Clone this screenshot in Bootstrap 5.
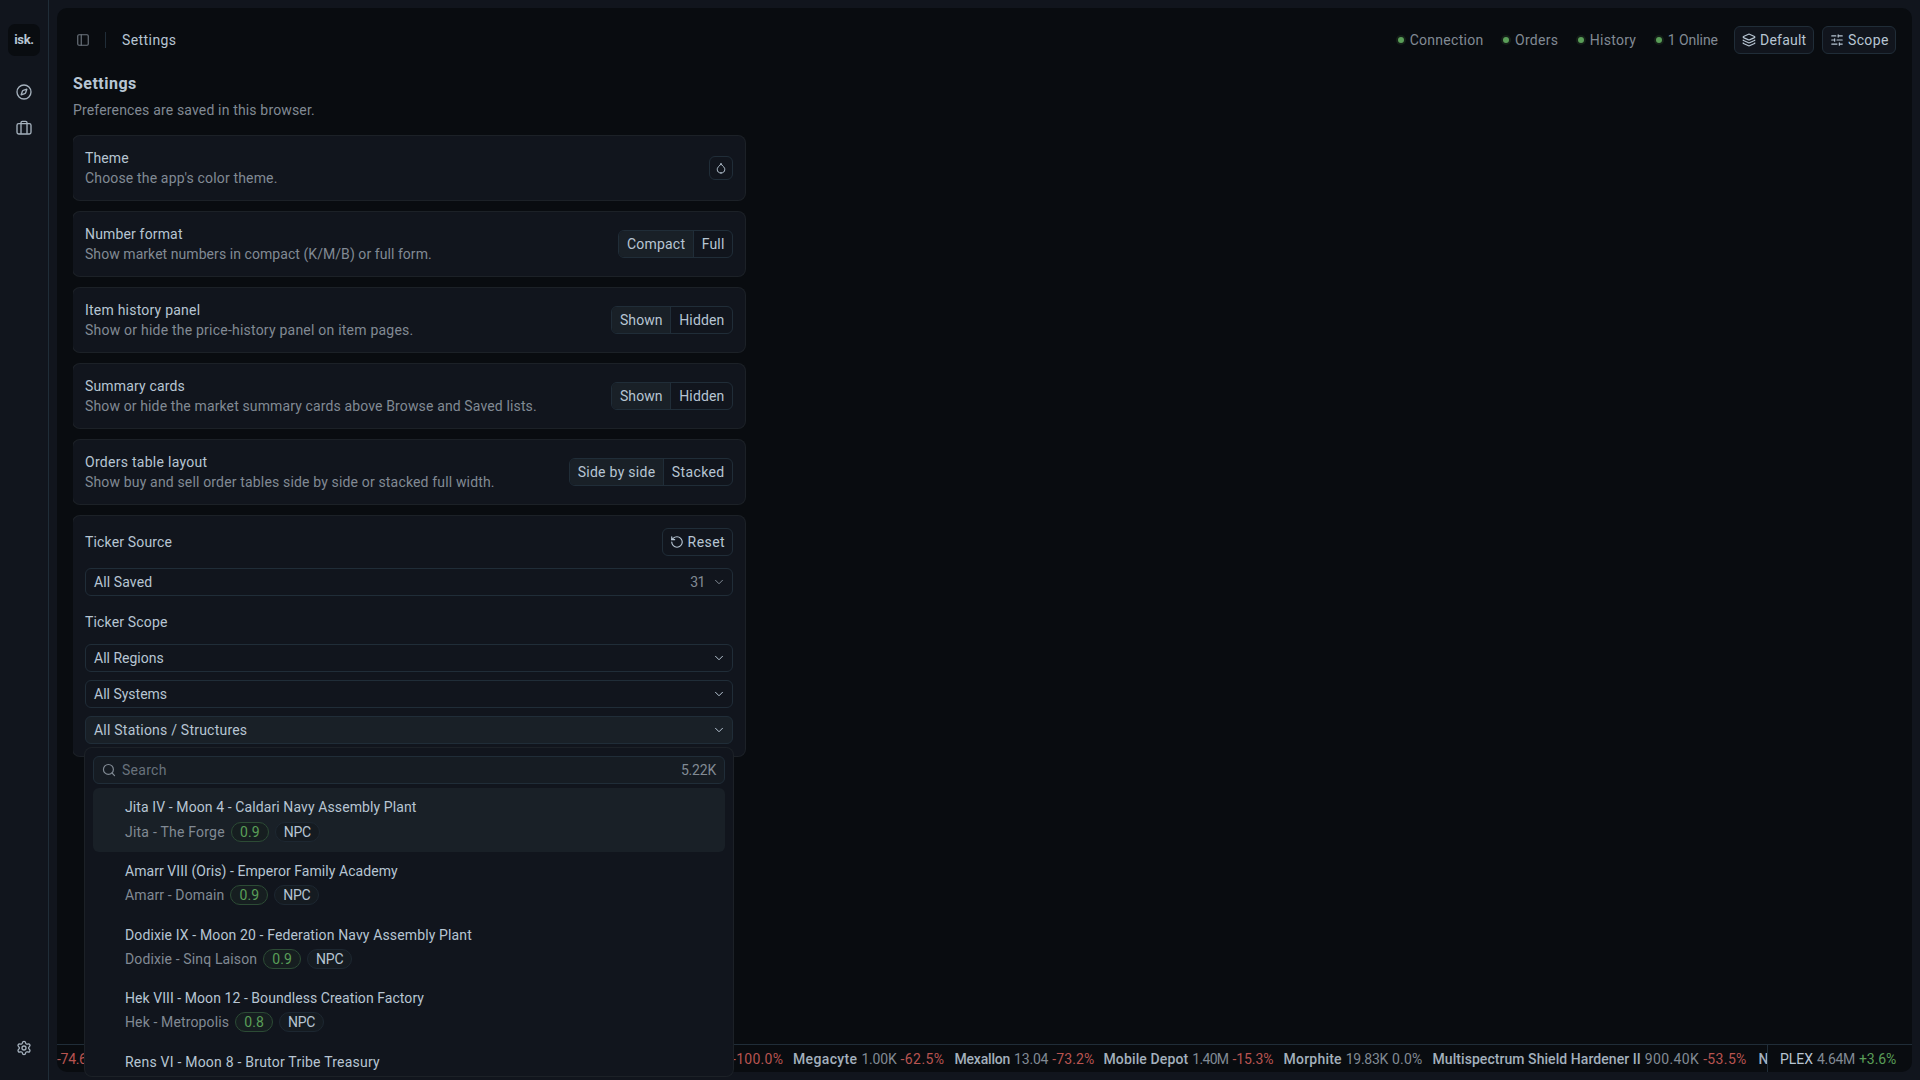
<!DOCTYPE html>
<html lang="en">
<head>
<meta charset="utf-8">
<meta name="viewport" content="width=device-width, initial-scale=1">
<title>Settings</title>
<link rel="stylesheet" href="https://cdn.jsdelivr.net/npm/bootstrap@5.3.0/dist/css/bootstrap.min.css">
<script defer src="https://cdn.jsdelivr.net/npm/bootstrap@5.3.0/dist/js/bootstrap.bundle.min.js"></script>
<style>
:root{--panel:#11151d;--ink:#b7c5d3;--dim:#818a94;--line:#202d38;--ring:#1c2127;--on:#192027;--up:#5a9e58;--down:#b85450}
body{background:var(--panel);color:var(--ink);font:14px/20px Roboto,"Noto Sans",sans-serif;letter-spacing:.16px;height:100vh;overflow:hidden}
svg{fill:none;stroke:currentColor;stroke-width:2;stroke-linecap:round;stroke-linejoin:round;flex:none}
.rail{width:49px;border-right:1px solid var(--line);padding:24px 8px 16px}
.logo{width:32px;height:32px;border-radius:7px;background:#090c10;font-size:13px;font-weight:700;letter-spacing:-.3px;margin-bottom:20px}
.rail-link{width:32px;height:32px;color:#a5b1bd}
.stage{margin:8px;background:#090c10;border-radius:10px;overflow:hidden}
.topbar{height:64px;padding:0 16px}
.toggle{margin-left:3px;color:#6c747d}
.divider{width:1px;height:16px;background:var(--line);margin:0 16px 0 15px}
.dim{color:var(--dim)}
.status{gap:19.5px}
.dot{width:6px;height:6px;border-radius:50%;background:var(--up);box-shadow:0 0 0 2px #152019;margin-right:6px}
.ctl{display:flex;align-items:center;height:28px;border:1px solid var(--line);border-radius:6px;background:var(--panel);color:var(--ink);padding:0 7px;white-space:nowrap}
.b-default{width:80px}
.b-scope{width:74px}
.picker{padding-left:8px;width:100%}
.opened{background:var(--on)}
.themer{width:24px;height:24px;padding:0;justify-content:center}
.content{margin-left:16px;overflow:hidden}
.stack{width:672px;gap:12px}
.panel{background:var(--panel);border-radius:7px;box-shadow:0 0 0 1px var(--ring);padding:12px}
.setting{height:64px}
.heading{font-size:16px;line-height:24px;font-weight:700;letter-spacing:.48px;margin-bottom:4px}
.scope-title{margin:12px 0 8px;line-height:28px}
.seg{display:flex;height:28px;border:1px solid var(--line);border-radius:6px;overflow:hidden;line-height:26px}
.seg span{padding:0 7.5px 0 8px}
.seg .on{background:var(--on);border-right:1px solid var(--line)}
.pop{position:absolute;left:85px;top:748px;width:648px;height:328px;border-radius:7px;background:var(--panel);box-shadow:0 0 0 1px var(--ring);padding:8px;overflow:hidden}
.find{background:#161c23;padding:0 8px;color:var(--dim)}
.find svg{margin-right:6px}
.find .hint{color:#68727c}
.opts{margin-top:4px}
.opt{height:63.5px;padding:9.5px 32px;border-radius:6px;white-space:nowrap}
.opt.on{background:var(--on)}
.opt b{display:block;font-weight:400;margin-bottom:4px}
.opt.on b{margin-top:-.5px;margin-bottom:4.5px}
.where{gap:6px}
.pill{height:20px;line-height:18px;border-radius:10px;border:1px solid #1d2731;background:#151b21;text-align:center;width:45px;letter-spacing:-.2px}
.pill.sec{width:38px;color:var(--up);border-color:#2c4b35;letter-spacing:.1px;background:#161e20}
.tape{height:28px;border-top:1px solid var(--line);white-space:nowrap;line-height:28px}
.reel{overflow:hidden;width:0}
.quote{display:flex;gap:4px;flex:none}
.quote b{font-weight:500;color:#a3b0bc}
.q-first{width:675px}
.q-under{width:61px}
.q-149{width:149px}.q-161{width:161.5px}.q-180{width:180px}.q-326{width:326px}
.up{color:var(--up)}.down{color:var(--down)}
.plex{border-left:1px solid var(--line);width:145px;padding-left:12px}
.n70{letter-spacing:-.7px}.n50{letter-spacing:-.5px}.n30{letter-spacing:-.3px}.n20{letter-spacing:-.2px}.n05{letter-spacing:-.05px}
.p06{letter-spacing:.06px}.p10{letter-spacing:.1px}.p13{letter-spacing:.13px}.p22{letter-spacing:.22px}.p28{letter-spacing:.28px}.p36{letter-spacing:.36px}.p42{letter-spacing:.42px}.p60{letter-spacing:.6px}
</style>
</head>
<body class="d-flex">
<nav class="rail d-flex flex-column align-items-center">
  <div class="logo d-flex align-items-center justify-content-center">isk.</div>
  <a class="rail-link d-flex align-items-center justify-content-center mb-1" href="#"><svg width="16" height="16" viewBox="0 0 24 24"><circle cx="12" cy="12" r="10.5"/><path d="m16.24 7.76-1.8 5.41a2 2 0 0 1-1.27 1.27l-5.41 1.8 1.8-5.41a2 2 0 0 1 1.27-1.27z"/></svg></a>
  <a class="rail-link d-flex align-items-center justify-content-center" href="#"><svg width="16" height="16" viewBox="0 0 24 24"><path d="M16.5 20V4a2 2 0 0 0-2-2h-5a2 2 0 0 0-2 2v16"/><rect x="1.500" y="5.500" width="21" height="15.500" rx="2.500"/></svg></a>
  <a class="rail-link d-flex align-items-center justify-content-center mt-auto" href="#"><svg width="16" height="16" viewBox="0 0 24 24"><path d="M9.67 4.14a2.34 2.34 0 0 1 4.66 0 2.34 2.34 0 0 0 3.32 1.91 2.34 2.34 0 0 1 2.33 4.03 2.34 2.34 0 0 0 0 3.84 2.34 2.34 0 0 1-2.33 4.03 2.34 2.34 0 0 0-3.32 1.91 2.34 2.34 0 0 1-4.66 0 2.34 2.34 0 0 0-3.32-1.91 2.34 2.34 0 0 1-2.33-4.03 2.34 2.34 0 0 0 0-3.84 2.34 2.34 0 0 1 2.33-4.03 2.34 2.34 0 0 0 3.32-1.91"/><circle cx="12" cy="12" r="3"/></svg></a>
</nav>
<main class="stage flex-grow-1 d-flex flex-column">
  <header class="topbar d-flex align-items-center flex-shrink-0">
    <svg class="toggle" width="14" height="14" viewBox="0 0 24 24"><rect x="3" y="3" width="18" height="18" rx="2"/><path d="M9 3v18"/></svg>
    <span class="divider"></span><span class="p42">Settings</span>
    <div class="ms-auto me-3 d-flex align-items-center dim status">
      <span class="d-flex align-items-center"><i class="dot"></i><span class="p28">Connection</span></span>
      <span class="d-flex align-items-center"><i class="dot"></i><span class="p28">Orders</span></span>
      <span class="d-flex align-items-center"><i class="dot"></i><span class="p28">History</span></span>
      <span class="d-flex align-items-center"><i class="dot"></i><span class="n05">1 Online</span></span>
    </div>
    <a class="ctl b-default text-decoration-none p22" href="#"><svg class="me-1" width="14" height="14" viewBox="0 0 24 24"><path d="M12.83 2.18a2 2 0 0 0-1.66 0L2.6 6.08a1 1 0 0 0 0 1.83l8.58 3.91a2 2 0 0 0 1.66 0l8.58-3.9a1 1 0 0 0 0-1.83z"/><path d="M2 12a1 1 0 0 0 .58.91l8.6 3.91a2 2 0 0 0 1.65 0l8.58-3.9A1 1 0 0 0 22 12"/><path d="M2 17a1 1 0 0 0 .58.91l8.6 3.91a2 2 0 0 0 1.65 0l8.58-3.9A1 1 0 0 0 22 17"/></svg>Default</a>
    <a class="ctl b-scope text-decoration-none ms-2 p36" href="#"><svg class="me-1" width="14" height="14" viewBox="0 0 24 24"><path d="M10 5H3m9 14H3M14 3v4m2 10v4m5-9h-9m9 7h-5m5-14h-7m-6 5v4m0-2H3"/></svg>Scope</a>
  </header>
  <div class="content flex-grow-1">
    <div class="stack d-flex flex-column">
      <div class="mb-1">
        <h1 class="heading">Settings</h1>
        <p class="dim mb-0">Preferences are saved in this browser.</p>
      </div>
      <section class="panel setting d-flex align-items-center justify-content-between">
        <div><div class="p10">Theme</div><div class="dim">Choose the app's color theme.</div></div>
        <button class="ctl themer"><svg width="12" height="12" viewBox="0 0 24 24"><path d="M12 22a7.5 7.5 0 0 0 7.5-7.5c0-2.200-1.200-4-3.200-5.700S12.600 5 12 2.500c-.6 2.500-2.300 4.600-4.300 6.300S4.500 12.300 4.500 14.500A7.500 7.500 0 0 0 12 22z"/></svg></button>
      </section>
      <section class="panel setting d-flex align-items-center justify-content-between">
        <div><div>Number format</div><div class="dim p06">Show market numbers in compact (K/M/B) or full form.</div></div>
        <div class="seg"><span class="on p22">Compact</span><span>Full</span></div>
      </section>
      <section class="panel setting d-flex align-items-center justify-content-between">
        <div><div class="p22">Item history panel</div><div class="dim p22">Show or hide the price-history panel on item pages.</div></div>
        <div class="seg"><span class="on p10">Shown</span><span>Hidden</span></div>
      </section>
      <section class="panel setting d-flex align-items-center justify-content-between">
        <div><div>Summary cards</div><div class="dim p13">Show or hide the market summary cards above Browse and Saved lists.</div></div>
        <div class="seg"><span class="on p10">Shown</span><span>Hidden</span></div>
      </section>
      <section class="panel setting d-flex align-items-center justify-content-between">
        <div><div class="p28">Orders table layout</div><div class="dim">Show buy and sell order tables side by side or stacked full width.</div></div>
        <div class="seg"><span class="on p28">Side by side</span><span class="p36">Stacked</span></div>
      </section>
      <section class="panel">
        <div class="d-flex align-items-center justify-content-between mb-2 pb-1"><span>Ticker Source</span>
          <button class="ctl p42"><svg class="me-1" width="14" height="14" viewBox="0 0 24 24"><path d="M3 12a9 9 0 1 0 9-9 9.75 9.75 0 0 0-6.74 2.74L3 8"/><path d="M3 3v5h5"/></svg>Reset</button></div>
        <button class="ctl picker"><span class="p10">All Saved</span><span class="ms-auto dim n50 me-2">31</span><svg class="dim" width="12" height="12" viewBox="0 0 24 24" stroke-width="2.5"><path d="m5 8.500 7 7 7-7"/></svg></button>
        <div class="scope-title">Ticker Scope</div>
        <button class="ctl picker"><span class="me-auto">All Regions</span><svg width="12" height="12" viewBox="0 0 24 24"><path d="m5 8.500 7 7 7-7"/></svg></button>
        <button class="ctl picker mt-2"><span class="me-auto">All Systems</span><svg width="12" height="12" viewBox="0 0 24 24"><path d="m5 8.500 7 7 7-7"/></svg></button>
        <button class="ctl picker mt-2 opened"><span class="me-auto p22">All Stations / Structures</span><svg width="12" height="12" viewBox="0 0 24 24"><path d="m5 8.500 7 7 7-7"/></svg></button>
      </section>
    </div>
  </div>
  <footer class="tape d-flex flex-shrink-0">
    <div class="reel flex-grow-1 d-flex">
      <div class="quote q-first"><span class="down n30">-74.6%</span></div>
      <div class="quote q-under"><span class="down p28">-100.0%</span></div>
      <div class="quote q-161"><b class="p36">Megacyte</b><span class="dim n20">1.00K</span><span class="down p42">-62.5%</span></div>
      <div class="quote q-149"><b class="n20">Mexallon</b><span class="dim n20">13.04</span><span class="down p10">-73.2%</span></div>
      <div class="quote q-180"><b class="p13">Mobile Depot</b><span class="dim n70">1.40M</span><span class="down n05">-15.3%</span></div>
      <div class="quote q-149"><b class="p22">Morphite</b><span class="dim n30">19.83K</span><span class="dim p22">0.0%</span></div>
      <div class="quote q-326"><b class="p06">Multispectrum Shield Hardener II</b><span class="dim p36">900.40K</span><span class="down p36">-53.5%</span></div>
      <div class="quote"><b>N</b></div>
    </div>
    <div class="plex d-flex gap-1 flex-shrink-0"><span class="n05">PLEX</span><span class="dim n30">4.64M</span><span class="up n05">+3.6%</span></div>
  </footer>
</main>
<div class="pop">
  <div class="ctl find"><svg width="14" height="14" viewBox="0 0 24 24"><circle cx="11" cy="11" r="8.500"/><path d="m21.500 21.500-4.300-4.300"/></svg><span class="hint p28">Search</span><span class="ms-auto n20">5.22K</span></div>
  <div class="opts">
    <div class="opt on"><b class="p10">Jita IV - Moon 4 - Caldari Navy Assembly Plant</b><div class="d-flex where"><span class="dim p22">Jita - The Forge</span><span class="pill sec">0.9</span><span class="pill">NPC</span></div></div>
    <div class="opt"><b class="p06">Amarr VIII (Oris) - Emperor Family Academy</b><div class="d-flex where"><span class="dim p13">Amarr - Domain</span><span class="pill sec">0.9</span><span class="pill">NPC</span></div></div>
    <div class="opt"><b class="p13">Dodixie IX - Moon 20 - Federation Navy Assembly Plant</b><div class="d-flex where"><span class="dim p13">Dodixie - Sinq Laison</span><span class="pill sec">0.9</span><span class="pill">NPC</span></div></div>
    <div class="opt"><b class="p06">Hek VIII - Moon 12 - Boundless Creation Factory</b><div class="d-flex where"><span class="dim p13">Hek - Metropolis</span><span class="pill sec">0.8</span><span class="pill">NPC</span></div></div>
    <div class="opt"><b class="p22">Rens VI - Moon 8 - Brutor Tribe Treasury</b></div>
  </div>
</div>
</body>
</html>
